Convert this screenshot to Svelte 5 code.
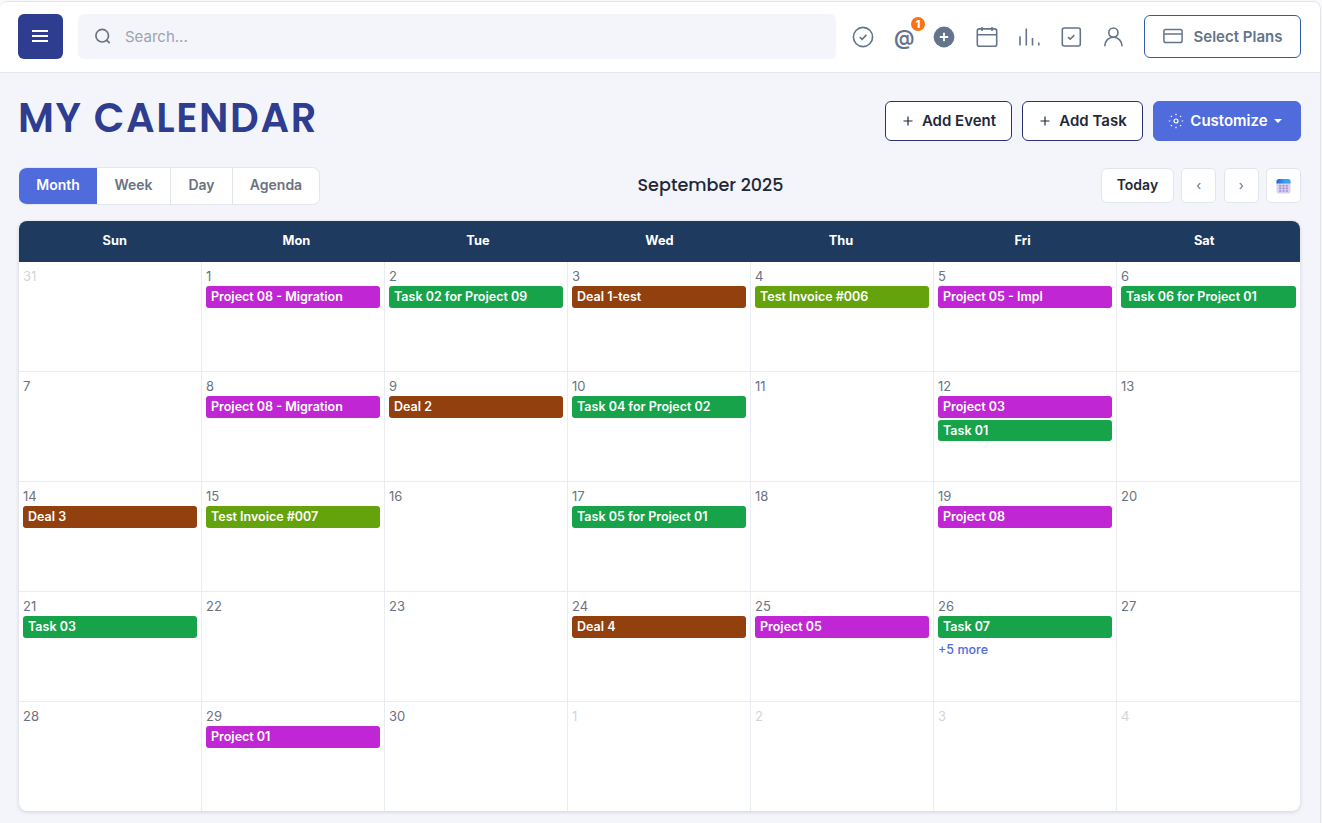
<script>
let view = $state('Month')
let query = $state('')

const views = ['Month', 'Week', 'Day', 'Agenda']
const weekdays = ['Sun', 'Mon', 'Tue', 'Wed', 'Thu', 'Fri', 'Sat']

const events = {
  1: [['project', 'Project 08 - Migration']],
  2: [['task', 'Task 02 for Project 09']],
  3: [['deal', 'Deal 1-test']],
  4: [['invoice', 'Test Invoice #006']],
  5: [['project', 'Project 05 - Impl']],
  6: [['task', 'Task 06 for Project 01']],
  8: [['project', 'Project 08 - Migration']],
  9: [['deal', 'Deal 2']],
  10: [['task', 'Task 04 for Project 02']],
  12: [['project', 'Project 03'], ['task', 'Task 01']],
  14: [['deal', 'Deal 3']],
  15: [['invoice', 'Test Invoice #007']],
  17: [['task', 'Task 05 for Project 01']],
  19: [['project', 'Project 08']],
  21: [['task', 'Task 03']],
  24: [['deal', 'Deal 4']],
  25: [['project', 'Project 05']],
  26: [['task', 'Task 07']],
  29: [['project', 'Project 01']],
}
const more = { 26: 5 }

// September starts on Monday, so the grid opens with Aug 31
const days = Array.from({ length: 35 }, (_, i) => {
  if (i === 0) return { num: 31, off: true, events: [] }
  if (i > 30) return { num: i - 30, off: true, events: [] }
  return { num: i, off: false, events: events[i] || [], more: more[i] }
})
</script>

<div class="app">
  <header class="topbar">
    <button class="menu" aria-label="Menu">
      <svg width="16" height="12" viewBox="0 0 16 12"><path d="M0 1h16M0 6h16M0 11h16" stroke="#fff" stroke-width="2"/></svg>
    </button>
    <label class="search">
      <svg width="18" height="18" viewBox="0 0 18 18" fill="none" stroke="#6b7280" stroke-width="1.7"><circle cx="8.2" cy="8.7" r="6.3"/><path d="M12.8 13.3l2.9 2.9"/></svg>
      <input type="text" placeholder="Search..." bind:value={query}>
    </label>
    <nav class="icons">
      <svg width="22" height="22" viewBox="0 0 22 22"><circle cx="11" cy="11" r="9.6"/><path d="M7.8 11.2l2.3 2.2 4.3-4.5"/></svg>
      <span class="mention">@<b class="badge">1</b></span>
      <svg class="add" width="22" height="22" viewBox="0 0 22 22"><circle cx="11" cy="11" r="10.4" class="solid"/><path d="M11 6.8v8.4M6.8 11h8.4" class="plus"/></svg>
      <svg width="22" height="22" viewBox="0 0 22 22"><rect x="1.3" y="2.9" width="19.4" height="17.3" rx="2"/><path d="M1.3 8.7h19.4M6 1v3.9M16 1v3.9"/></svg>
      <svg width="22" height="22" viewBox="0 0 22 22"><path d="M2 10.3v9.3M8.3 2.5v17.1M14.5 12v7.6M20.8 16.4v3.2"/></svg>
      <svg width="22" height="22" viewBox="0 0 22 22"><rect x="2.3" y="2" width="18" height="18" rx="2"/><path d="M8.1 11.2l2.1 2 4.1-4.1"/></svg>
      <svg width="22" height="22" viewBox="0 0 22 22"><circle cx="11.4" cy="6.6" r="4.6"/><path d="M2.7 20.3c.3-5.6 3.9-9.1 8.7-9.1s8.4 3.5 8.7 9.1"/></svg>
    </nav>
    <button class="plans">
      <svg width="20" height="16" viewBox="0 0 20 16" fill="none" stroke="#64748b" stroke-width="1.5"><rect x=".9" y="1.4" width="18.2" height="13.2" rx="1.8"/><path d="M1 6h18"/></svg>
      <span>Select Plans</span>
    </button>
  </header>

  <main>
    <div class="heading">
      <h1>MY CALENDAR</h1>
      <div class="actions">
        <button class="btn event-btn">
          <svg width="10" height="10" viewBox="0 0 10 10"><path d="M5 .5v9M.5 5h9" stroke="currentColor" stroke-width="1.2"/></svg>
          <span>Add Event</span>
        </button>
        <button class="btn task-btn">
          <svg width="10" height="10" viewBox="0 0 10 10"><path d="M5 .5v9M.5 5h9" stroke="currentColor" stroke-width="1.2"/></svg>
          <span>Add Task</span>
        </button>
        <button class="btn customize">
          <svg width="16" height="16" viewBox="0 0 16 16" fill="none" stroke="#fff" stroke-width="1.2"><circle cx="8" cy="8" r="2"/><path d="M8 .8v1.5M8 13.7v1.5M.8 8h1.5M13.7 8h1.5M2.9 2.9l1 1M12.1 12.1l1 1M2.9 13.1l1-1M12.1 3.9l1-1"/></svg>
          <span>Customize</span>
          <i class="caret"></i>
        </button>
      </div>
    </div>

    <div class="toolbar">
      <div class="views">
        {#each views as v}
          <button class:active={view === v} onclick={() => view = v}>{v}</button>
        {/each}
      </div>
      <h2>September 2025</h2>
      <div class="pager">
        <button class="today">Today</button>
        <button class="step">‹</button>
        <button class="step">›</button>
        <button class="step pick" aria-label="Pick date">
          <svg width="15" height="16" viewBox="0 0 15 16">
            <defs>
              <linearGradient id="pick-top"><stop offset="0" stop-color="#2563d8"/><stop offset=".6" stop-color="#36a3f5"/></linearGradient>
            </defs>
            <rect x=".5" y="1.5" width="14" height="14" rx="2" fill="#dcd0f0"/>
            <path d="M.5 5.5v-2A2.5 2.5 0 0 1 3 1h9a2.5 2.5 0 0 1 2.5 2.5v2z" fill="url(#pick-top)"/>
            <path d="M3.2 7.8h2M6.5 7.8h2M9.8 7.8h2M3.2 10.4h2M6.5 10.4h2M9.8 10.4h2M3.2 13h2M6.5 13h2M9.8 13h2" stroke="#9a8fd0" stroke-width="1.6"/>
          </svg>
        </button>
      </div>
    </div>

    <section class="calendar">
      <div class="weekdays">
        {#each weekdays as day}
          <div>{day}</div>
        {/each}
      </div>
      <div class="grid">
        {#each days as day}
          <div class="cell" class:off={day.off}>
            <div class="num">{day.num}</div>
            {#each day.events as [kind, title]}
              <div class="event {kind}">{title}</div>
            {/each}
            {#if day.more}
              <div class="more">+{day.more} more</div>
            {/if}
          </div>
        {/each}
      </div>
    </section>
  </main>
</div>

<style>
:global(body) {
  background: #f9f9fb;
  overflow: hidden;
}
* {
  box-sizing: border-box;
}
.app {
  width: 1321px;
  height: 822px;
  margin-top: 1px;
  border: 1px solid #e2e5ea;
  border-width: 1px 1px 0 0;
  border-radius: 8px 8px 0 0;
  background: #f4f5fa;
  font-family: Inter, sans-serif;
  color: #1f2937;
  overflow: hidden;
}
button {
  font-family: inherit;
  padding: 0;
  border: 0;
  background: #fff;
  display: flex;
  align-items: center;
  justify-content: center;
  cursor: pointer;
}
.topbar {
  height: 71px;
  padding: 0 19px 2px 18px;
  display: flex;
  align-items: center;
  background: #fff;
  border-bottom: 1px solid #e2e5ea;
}
.menu {
  width: 45px;
  height: 45px;
  padding-right: 1px;
  border-radius: 6px;
  background: #2e3d8f;
}
.search {
  flex: 1;
  height: 45px;
  margin-left: 15px;
  padding-left: 16px;
  display: flex;
  align-items: center;
  border-radius: 6px;
  background: #f4f5fa;
}
.search input {
  flex: 1;
  margin-left: 13px;
  padding: 0;
  border: 0;
  outline: 0;
  background: transparent;
  font: 400 15px Inter, sans-serif;
}
.search input::placeholder {
  color: #9ca3af;
}
.icons {
  margin-top: 1px;
  margin-left: 16px;
  display: flex;
  align-items: center;
  gap: 20px;
}
.icons svg {
  fill: none;
  stroke: #64748b;
  stroke-width: 1.6;
}
.icons .solid {
  fill: #64748b;
  stroke: none;
}
.icons .plus {
  stroke: #fff;
  stroke-width: 1.8;
}
.icons .add {
  margin-right: 1px;
}
.mention {
  position: relative;
  width: 20px;
  height: 28px;
  margin-right: -1px;
  line-height: 29px;
  text-align: center;
  font-size: 20.5px;
  font-weight: 600;
  color: #64748b;
}
.badge {
  position: absolute;
  top: -6px;
  right: -11px;
  width: 14px;
  height: 14px;
  border-radius: 50%;
  background: #f97316;
  color: #fff;
  font-size: 10px;
  line-height: 14px;
}
.plans {
  width: 157px;
  height: 43px;
  margin-left: 20px;
  gap: 11px;
  border: 1px solid #2f5aae;
  border-radius: 6px;
  font-size: 15px;
  font-weight: 600;
  color: #64748b;
}
main {
  padding: 28px 19px 0;
}
.heading {
  height: 40px;
  display: flex;
  justify-content: space-between;
}
h1 {
  margin: 0 0 0 -1px;
  font: 600 40px/34px Poppins, Inter, sans-serif;
  letter-spacing: 1.6px;
  color: #2e3d8f;
}
.actions {
  display: flex;
  gap: 10px;
}
.btn {
  height: 40px;
  padding: 0 0 1px 2px;
  border: 1px solid #2c3270;
  border-radius: 6px;
  font-size: 15px;
  font-weight: 600;
  color: #1f2937;
  gap: 9px;
}
.event-btn {
  width: 127px;
}
.task-btn {
  width: 121px;
}
.customize {
  width: 148px;
  padding: 0 4px 1px 0;
  gap: 6px;
  border-color: #4f6bdc;
  background: #4f6bdc;
  color: #fff;
}
.caret {
  margin-top: 1px;
  border: 4px solid transparent;
  border-top-color: #fff;
  border-bottom: 0;
}
.toolbar {
  height: 38px;
  margin-top: 26px;
  display: grid;
  grid-template-columns: 301px 1fr 200px;
}
.views {
  display: flex;
  border: 1px solid #e2e5ec;
  border-left: 0;
  border-radius: 8px;
  background: #fff;
  overflow: hidden;
}
.views button {
  height: 36px;
  width: 74px;
  padding-bottom: 3px;
  border-right: 1px solid #e2e5ec;
  font-size: 14px;
  font-weight: 600;
  color: #6b7280;
}
.views button:first-child {
  width: 78px;
  border: 0;
}
.views button:nth-child(3) {
  width: 62px;
}
.views button:last-child {
  width: 86px;
  border: 0;
}
.views .active {
  background: #4f6bdc;
  color: #fff;
}
h2 {
  margin: 0;
  text-align: center;
  font: 500 17.6px/36px Poppins, Inter, sans-serif;
}
.pager {
  display: flex;
  align-items: center;
  gap: 7.5px;
  padding-bottom: 2px;
}
.pager button {
  height: 35px;
  border: 1px solid #e2e5ec;
  border-radius: 5px;
}
.pager .today {
  width: 73px;
  padding-bottom: 1px;
  border-radius: 6px;
  font-size: 14px;
  font-weight: 600;
  color: #1f2937;
}
.step {
  width: 35px;
  font-size: 13px;
  color: #6b7280;
}
.pager .pick {
  padding-top: 2px;
}
.calendar {
  width: 1281px;
  height: 590px;
  margin-top: 16px;
  border-radius: 8px;
  background: #fff;
  box-shadow: 0 1px 4px rgba(0, 0, 0, .14);
  overflow: hidden;
}
.weekdays {
  height: 41px;
  padding: 0 5px;
  display: grid;
  grid-template-columns: repeat(7, 1fr);
  background: #1e3a5f;
  color: #fff;
  font-size: 12.8px;
  font-weight: 700;
  line-height: 39px;
  text-align: center;
}
.grid {
  display: grid;
  grid-template-columns: repeat(7, 183px);
  grid-auto-rows: 110px;
}
.cell {
  padding: 5px 4px 0;
  border-right: 1px solid #e9edf2;
  border-bottom: 1px solid #e9edf2;
}
.cell:nth-child(7n) {
  border-right: 0;
}
.num {
  height: 19px;
  line-height: 19px;
  font-size: 13px;
  color: #6b7280;
}
.off .num {
  color: #d1d5db;
}
.event {
  height: 21.7px;
  margin-bottom: 2px;
  padding: 0 5px;
  border-radius: 3px;
  color: #fff;
  font-size: 12.5px;
  font-weight: 600;
  line-height: 21px;
  white-space: nowrap;
}
.project {
  background: #c026d3;
}
.task {
  background: #16a34a;
}
.deal {
  background: #92400e;
}
.invoice {
  background: #65a30d;
}
.more {
  font-size: 12.5px;
  font-weight: 500;
  line-height: 19px;
  color: #4f6bdc;
}
</style>
